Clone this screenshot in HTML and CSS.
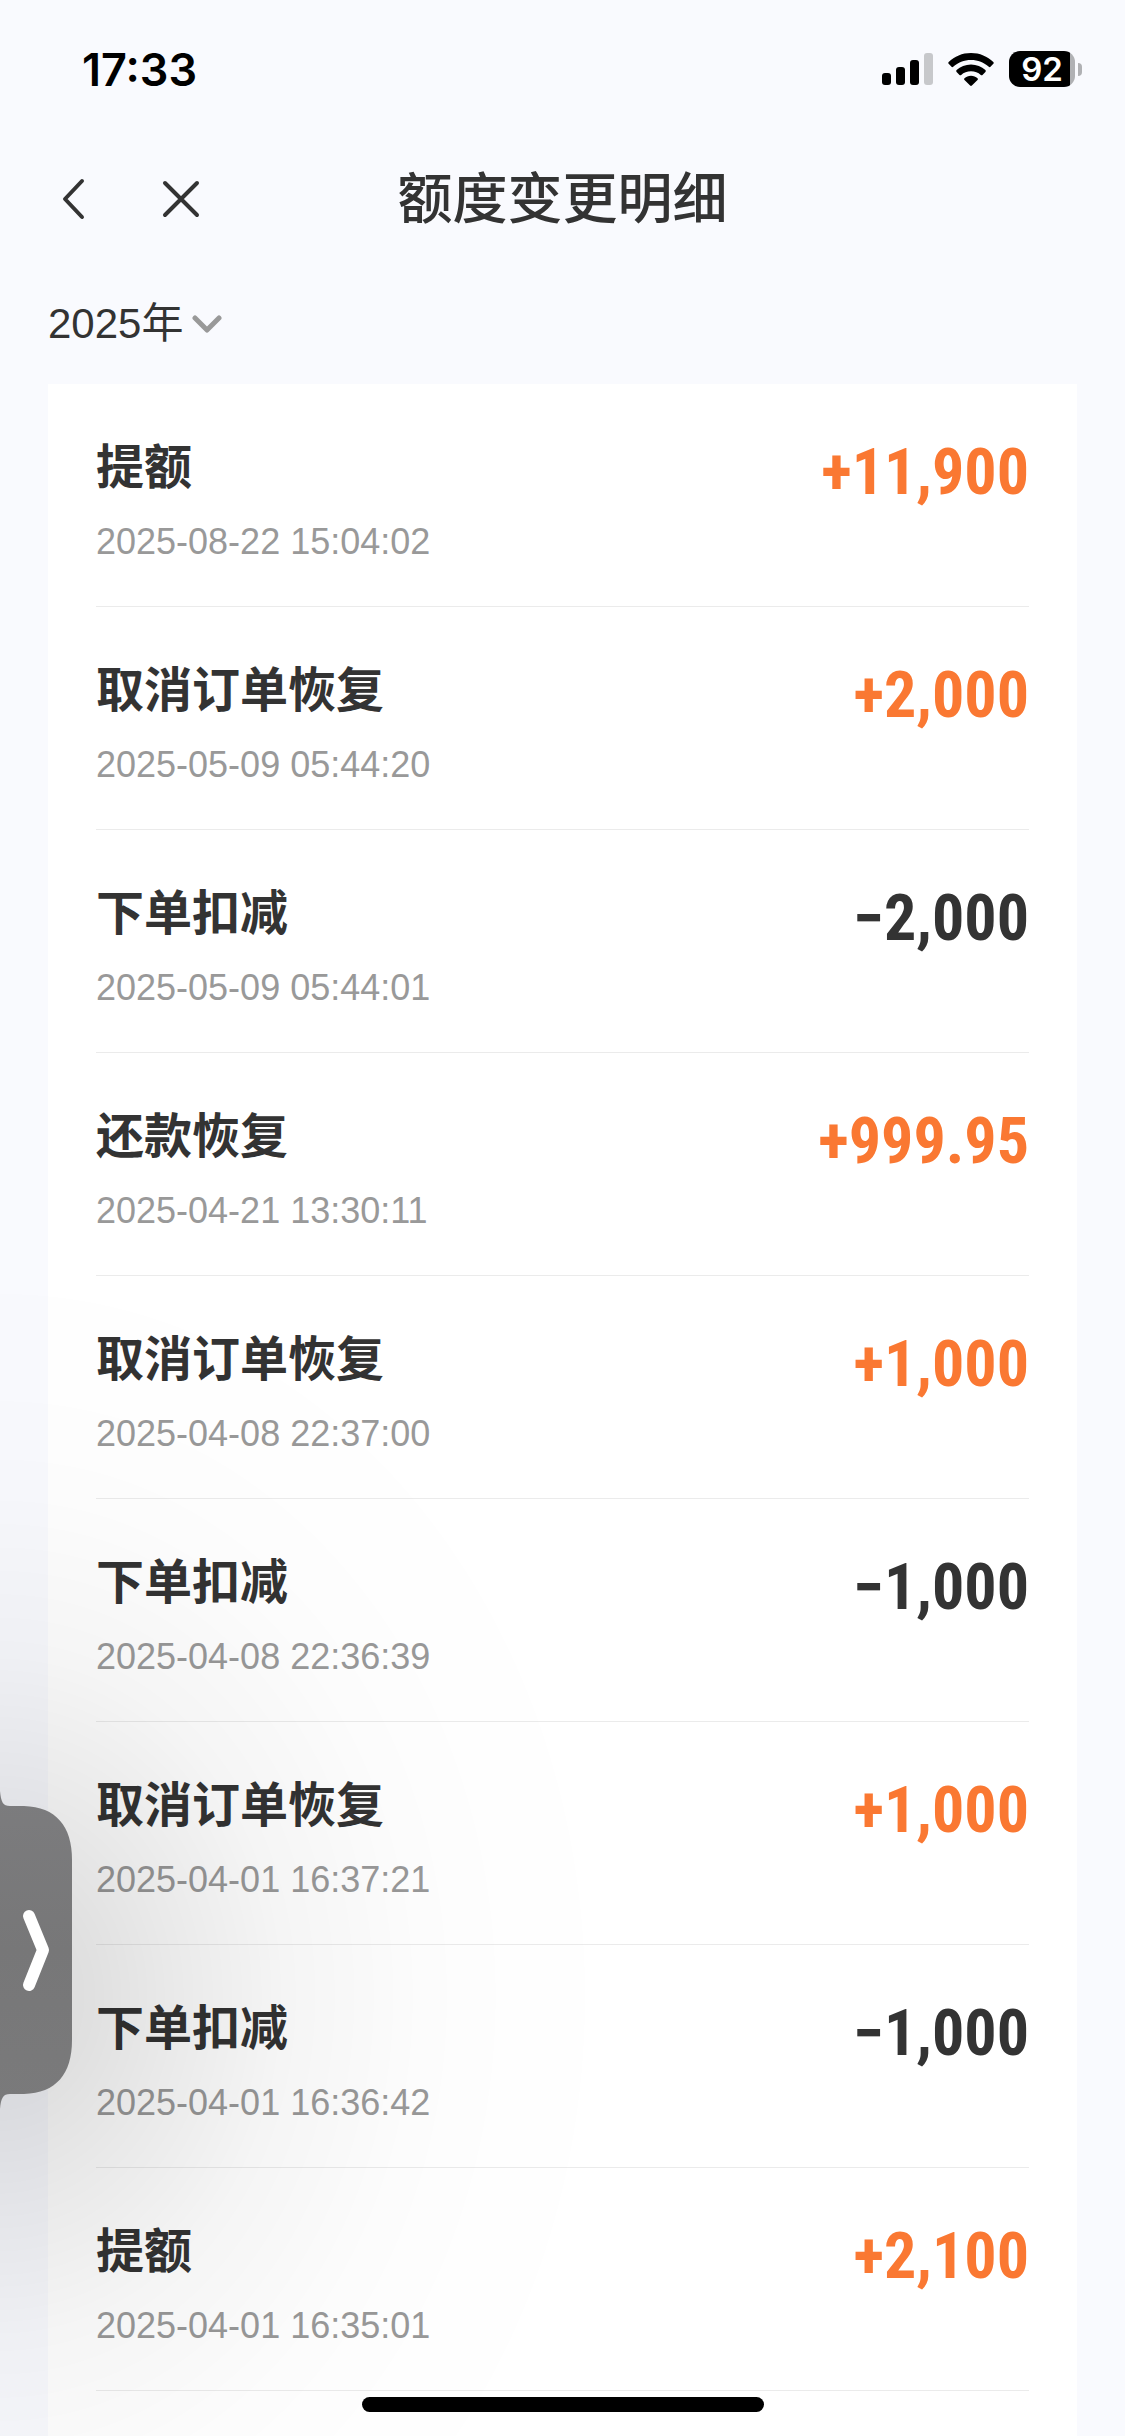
FILE: index.html
```html
<!DOCTYPE html>
<html lang="zh-CN">
<head>
  <meta charset="UTF-8">
  <meta name="viewport" content="width=device-width, initial-scale=1.0">
  <title>额度变更明细</title>
  <link rel="stylesheet" href="styles.css">
</head>
<body>
<div class="status-bar">
  <span class="status-time">17:33</span>
  <div class="status-icons">
    <svg class="icon-signal" width="51" height="32" viewBox="0 0 51 32">
      <rect x="0" y="20" width="9" height="12" rx="3"/>
      <rect x="14" y="14" width="9" height="18" rx="3"/>
      <rect x="28" y="7" width="9" height="25" rx="3"/>
      <rect x="42" y="0" width="9" height="32" rx="3" fill="#c7c8cb"/>
    </svg>
    <svg class="icon-wifi" width="46" height="33" viewBox="0 0 46 33">
      <path d="M23 0C31.800 0 39.500 3.400 45.300 9Q46.200 9.900 45.300 10.800L42.500 13.800Q41.700 14.600 40.800 13.800C36 9.400 30 7 23 7S10 9.400 5.200 13.800Q4.300 14.600 3.500 13.800L.7 10.800Q-.2 9.900 .7 9C6.500 3.400 14.200 0 23 0Z"/>
      <path d="M23 11.500C28.600 11.500 33.600 13.600 37.400 17.100Q38.300 18 37.400 18.900L34.500 21.900Q33.700 22.700 32.800 21.900C30.200 19.600 26.900 18.300 23 18.300S15.800 19.600 13.200 21.900Q12.300 22.700 11.500 21.900L8.600 18.900Q7.700 18 8.600 17.100C12.400 13.600 17.400 11.500 23 11.500Z"/>
      <path d="M23 22.800C25.600 22.800 27.800 23.700 29.500 25.200Q30.400 26 29.500 26.900L23.900 32.600Q23 33.400 22.100 32.600L16.500 26.900Q15.600 26 16.500 25.200C18.200 23.700 20.400 22.800 23 22.800Z"/>
    </svg>
    <div class="battery">
      <div class="battery-body">92</div>
      <div class="battery-cap"></div>
    </div>
  </div>
</div>

<header class="nav-bar">
  <div class="nav-buttons">
    <button class="nav-btn" aria-label="返回">
      <svg width="24" height="44" viewBox="0 0 24 44"><path d="M21 4L4 22L21 40"/></svg>
    </button>
    <button class="nav-btn" aria-label="关闭">
      <svg width="40" height="40" viewBox="0 0 40 40"><path d="M4 4L36 36M36 4L4 36"/></svg>
    </button>
  </div>
  <h1 class="nav-title">额度变更明细</h1>
</header>

<div class="filter">
  <select class="year-select" aria-label="年份">
    <option>2025年</option>
  </select>
  <svg class="year-arrow" width="30" height="20" viewBox="0 0 30 20"><path d="M3 4L15 16L27 4"/></svg>
</div>

<main class="card">
  <ul class="list">
    <li class="item">
      <div class="info"><div class="name">提额</div><div class="date">2025-08-22 15:04:02</div></div>
      <div class="amount plus">+11,900</div>
    </li>
    <li class="item">
      <div class="info"><div class="name">取消订单恢复</div><div class="date">2025-05-09 05:44:20</div></div>
      <div class="amount plus">+2,000</div>
    </li>
    <li class="item">
      <div class="info"><div class="name">下单扣减</div><div class="date">2025-05-09 05:44:01</div></div>
      <div class="amount">−2,000</div>
    </li>
    <li class="item">
      <div class="info"><div class="name">还款恢复</div><div class="date">2025-04-21 13:30:11</div></div>
      <div class="amount plus">+999.95</div>
    </li>
    <li class="item">
      <div class="info"><div class="name">取消订单恢复</div><div class="date">2025-04-08 22:37:00</div></div>
      <div class="amount plus">+1,000</div>
    </li>
    <li class="item">
      <div class="info"><div class="name">下单扣减</div><div class="date">2025-04-08 22:36:39</div></div>
      <div class="amount">−1,000</div>
    </li>
    <li class="item">
      <div class="info"><div class="name">取消订单恢复</div><div class="date">2025-04-01 16:37:21</div></div>
      <div class="amount plus">+1,000</div>
    </li>
    <li class="item">
      <div class="info"><div class="name">下单扣减</div><div class="date">2025-04-01 16:36:42</div></div>
      <div class="amount">−1,000</div>
    </li>
    <li class="item">
      <div class="info"><div class="name">提额</div><div class="date">2025-04-01 16:35:01</div></div>
      <div class="amount plus">+2,100</div>
    </li>
  </ul>
</main>

<div class="side-shadow"></div>
<button class="side-tab" aria-label="展开">
  <svg width="72" height="320" viewBox="0 0 72 320">
    <defs>
      <linearGradient id="tabFill" x1="0" y1="0" x2="0" y2="1">
        <stop offset="0" stop-color="#7c7c7e"/>
        <stop offset="0.5" stop-color="#777778"/>
        <stop offset="1" stop-color="#7a7a7b"/>
      </linearGradient>
    </defs>
    <path fill="url(#tabFill)" d="M0 1C1 12 3 16 10 16H24C56 17 72 36 72 70V250C72 284 56 303 24 304H10C3 304 1 308 0 319Z"/>
    <path fill="none" stroke="#fff" stroke-width="12" stroke-linecap="round" stroke-linejoin="round" d="M29 126L43 160L29 195"/>
  </svg>
</button>
<div class="home-indicator"></div>
</body>
</html>
```

FILE: styles.css
```css
* { margin: 0; padding: 0; box-sizing: border-box; }
body { display: flex; flex-direction: column; min-height: 100vh; background-color: #f9fafe; color: #333; font-family: "Liberation Sans", "Noto Sans CJK SC", sans-serif; }
button { background: none; border: none; cursor: pointer; }
svg { display: block; }

/* status bar */
.status-bar { display: flex; justify-content: space-between; align-items: center; height: 138px; padding: 0 43px 0 82px; color: #000; font-family: Inter, sans-serif; }
.status-time { font-size: 45px; font-weight: 600; }
.status-icons { display: flex; align-items: center; gap: 15px; }
.battery { display: flex; align-items: center; gap: 3px; }
.battery-body { width: 66px; height: 36px; border-radius: 11px; background: linear-gradient(to right, #000 61px, #b0b1b4 61px); color: #fff; font-size: 33px; font-weight: 600; line-height: 36px; text-align: center; }
.battery-cap { width: 4px; height: 13px; border-radius: 0 6px 6px 0; background-color: #b0b1b4; }

/* nav */
.nav-bar { position: relative; display: flex; align-items: center; justify-content: center; height: 122px; }
.nav-buttons { position: absolute; left: 61px; display: flex; align-items: center; gap: 76px; }
.nav-btn path { fill: none; stroke: #333; stroke-width: 4; stroke-linecap: round; stroke-linejoin: round; }
.nav-title { font-size: 55px; font-weight: 500; line-height: 72px; }

.filter { display: flex; align-items: center; gap: 8px; height: 124px; padding: 4px 48px 0; }
.year-select { appearance: none; border: none; outline: none; background: none; color: #333; font-family: inherit; font-size: 42px; line-height: 60px; }
.year-arrow path { fill: none; stroke: #999; stroke-width: 5; stroke-linecap: round; stroke-linejoin: round; }

/* list */
.card { flex: 1; margin: 0 48px; padding: 0 48px; background-color: #fff; }
.list { list-style: none; }
.item { display: flex; justify-content: space-between; align-items: flex-start; padding: 56px 0 42px; border-bottom: 1px solid #ebebeb; }
.name { margin-bottom: 24px; font-size: 48px; font-weight: 600; line-height: 56px; }
.date { color: #999; font-size: 36px; line-height: 44px; }
.amount { font-family: "Roboto Condensed", Roboto, sans-serif; font-size: 64px; font-weight: 700; line-height: 66px; }
.plus { color: #fa7832; }

/* floating tab on the left edge */
.side-shadow { position: fixed; left: 0; bottom: 0; width: 650px; height: 1200px; pointer-events: none; background: radial-gradient(650px 780px at 0 760px, rgba(0, 0, 0, 0.15) 0%, rgba(0, 0, 0, 0.12) 14%, rgba(0, 0, 0, 0.085) 26%, rgba(0, 0, 0, 0.04) 44%, rgba(0, 0, 0, 0.012) 65%, rgba(0, 0, 0, 0.004) 80%, rgba(0, 0, 0, 0) 100%); }
.side-tab { position: fixed; left: 0; bottom: 326px; }
.home-indicator { position: fixed; left: 50%; bottom: 24px; width: 402px; height: 15px; margin-left: -201px; border-radius: 8px; background-color: #000; }
```
